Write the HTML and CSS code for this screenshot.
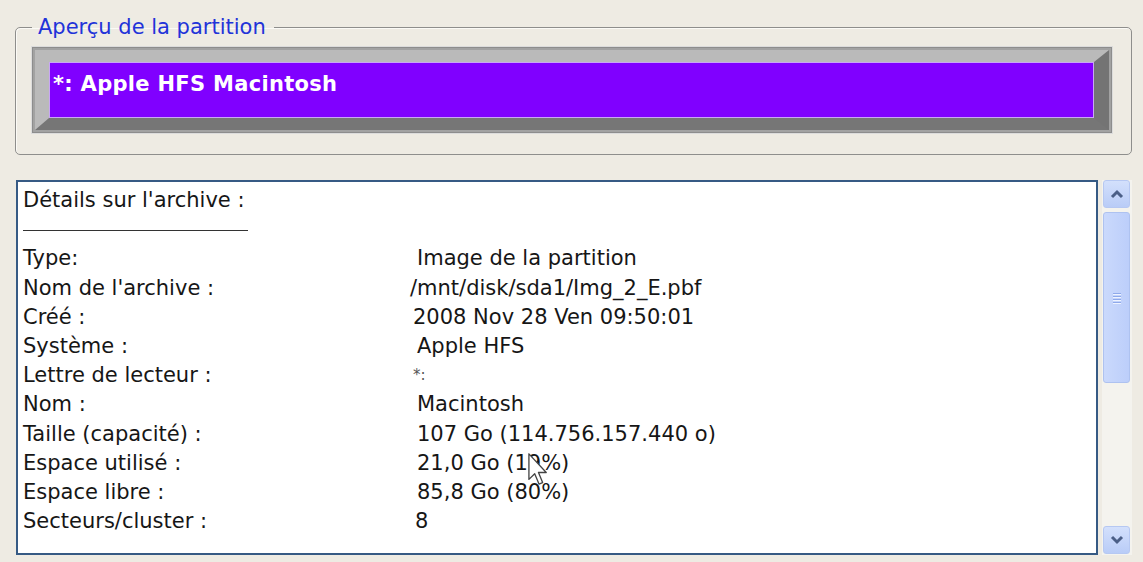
FILE: index.html
```html
<!DOCTYPE html>
<html lang="fr">

<head>
    <meta charset="UTF-8">
    <meta name="viewport" content="width=device-width, initial-scale=1.0">
    <title>Aperçu de la partition</title>
    <link rel="stylesheet" href="styles.css">
</head>

<body>
    <fieldset class="group">
        <legend>Aperçu de la partition</legend>
        <div class="bar">
            <div class="bevel">
                <div class="part-label">*: Apple HFS Macintosh</div>
            </div>
        </div>
    </fieldset>

    <div class="details">
        <div class="panel">
            <div class="info">
                <div class="wide">Détails sur l'archive :</div>
                <div class="wide rule-row"><span class="rule"></span></div>

                <div>Type:</div>
                <div class="v-r4">Image de la partition</div>
                <div>Nom de l'archive :</div>
                <div class="v-l3">/mnt/disk/sda1/Img_2_E.pbf</div>
                <div>Créé :</div>
                <div>2008 Nov 28 Ven 09:50:01</div>
                <div>Système :</div>
                <div class="v-r4">Apple HFS</div>
                <div>Lettre de lecteur :</div>
                <div class="small">*:</div>
                <div>Nom :</div>
                <div class="v-r4">Macintosh</div>
                <div>Taille (capacité) :</div>
                <div class="v-r4">107 Go (114.756.157.440 o)</div>
                <div>Espace utilisé :</div>
                <div class="v-r4">21,0 Go (19%)</div>
                <div>Espace libre :</div>
                <div class="v-r4">85,8 Go (80%)</div>
                <div>Secteurs/cluster :</div>
                <div class="v-r2">8</div>
            </div>

            <!-- mouse pointer left on the screenshot -->
            <svg class="pointer" width="20" height="33" viewBox="0 0 12 20">
                <path d="M0.5 0.5 L0.5 16 L4 12.6 L6.6 18.8 L8.8 17.9 L6.3 11.8 L11 11.8 Z"
                    fill="#fff" stroke="#444" stroke-width="0.8" stroke-linejoin="round" />
            </svg>
        </div>

        <div class="scrollbar">
            <div class="sb-btn">
                <svg width="14" height="10" viewBox="0 0 14 10">
                    <path d="M2 8 L7 3 L12 8" fill="none" stroke="#4b5f87" stroke-width="3" />
                </svg>
            </div>
            <div class="sb-thumb">
                <span></span><span></span><span></span><span></span>
            </div>
            <div class="sb-track"></div>
            <div class="sb-btn">
                <svg width="14" height="10" viewBox="0 0 14 10">
                    <path d="M2 2 L7 7 L12 2" fill="none" stroke="#4b5f87" stroke-width="3" />
                </svg>
            </div>
        </div>
    </div>
</body>

</html>
```

FILE: styles.css
```css
body {
    margin: 0;
    background-color: #eeebe3;
    font-family: "DejaVu Sans", Verdana, sans-serif;
    color: #161616;
}

.group {
    margin: 15px 11px 0 15px;
    padding: 0 19px 21px 16px;
    border: 1px solid #8e8e8c;
    border-radius: 5px;
    box-shadow: inset 1px 1px 0 #fbfaf6;
}

.group legend {
    padding: 0 8px 0 6px;
    font-size: 21px;
    line-height: 24px;
    color: #2233d9;
}

.bar {
    margin-top: 8px;
    border: 1px solid #8d8d8d;
    padding: 2px;
    background-color: #a2a2a2;
    box-shadow: 0 0 0 1px #dcdcdc;
}

.bevel {
    border-style: solid;
    border-width: 12px 15px 12px 14px;
    border-color: #bababa #747474 #767676 #bababa;
}

.part-label {
    box-sizing: content-box;
    height: 45px;
    padding: 9px 0 0 3px;
    border: 1px solid #c9a6f5;
    background-color: #8000ff;
    color: #fff;
    font-size: 21px;
    font-weight: bold;
    line-height: 24px;
    letter-spacing: 0.3px;
}

.details {
    display: flex;
    gap: 4px;
    height: 375px;
    margin: 25px 11px 0 16px;
}

.panel {
    position: relative;
    flex: 1;
    background-color: #fff;
    border: 2px solid #365a84;
    padding: 4px 5px;
    overflow: hidden;
}

.info {
    display: grid;
    grid-template-columns: 390px 1fr;
    font-size: 21px;
    line-height: 29.2px;
}

.info .wide {
    grid-column: 1 / 3;
}

.rule-row {
    height: 29.2px;
}

.rule {
    display: block;
    width: 225px;
    height: 15px;
    border-bottom: 1px solid #333;
}

.v-r4 {
    padding-left: 4px;
}

.v-r2 {
    padding-left: 2px;
}

.v-l3 {
    margin-left: -3px;
}

.small {
    font-size: 15px;
    color: #555;
}

.pointer {
    position: absolute;
    left: 510px;
    top: 271px;
}

.scrollbar {
    width: 30px;
    display: flex;
    flex-direction: column;
    gap: 4px;
    padding: 0 2px 1px 1px;
    box-sizing: border-box;
    background-color: #f4f3ee;
}

.sb-btn {
    height: 28px;
    display: flex;
    align-items: center;
    justify-content: center;
    border: 1px solid #b6c8f2;
    border-radius: 3px;
    background: linear-gradient(#d3e0fc, #b9ccf7);
    box-sizing: border-box;
}

.sb-thumb {
    height: 171px;
    display: flex;
    flex-direction: column;
    align-items: center;
    justify-content: center;
    gap: 2px;
    border: 1px solid #aec2f0;
    border-radius: 3px;
    background: linear-gradient(90deg, #cad9fc, #bccefa);
    box-sizing: border-box;
}

.sb-thumb span {
    width: 8px;
    height: 1px;
    background-color: #8fa9ea;
    box-shadow: 0 1px 0 #eef3ff;
}

.sb-track {
    flex: 1;
}
```
